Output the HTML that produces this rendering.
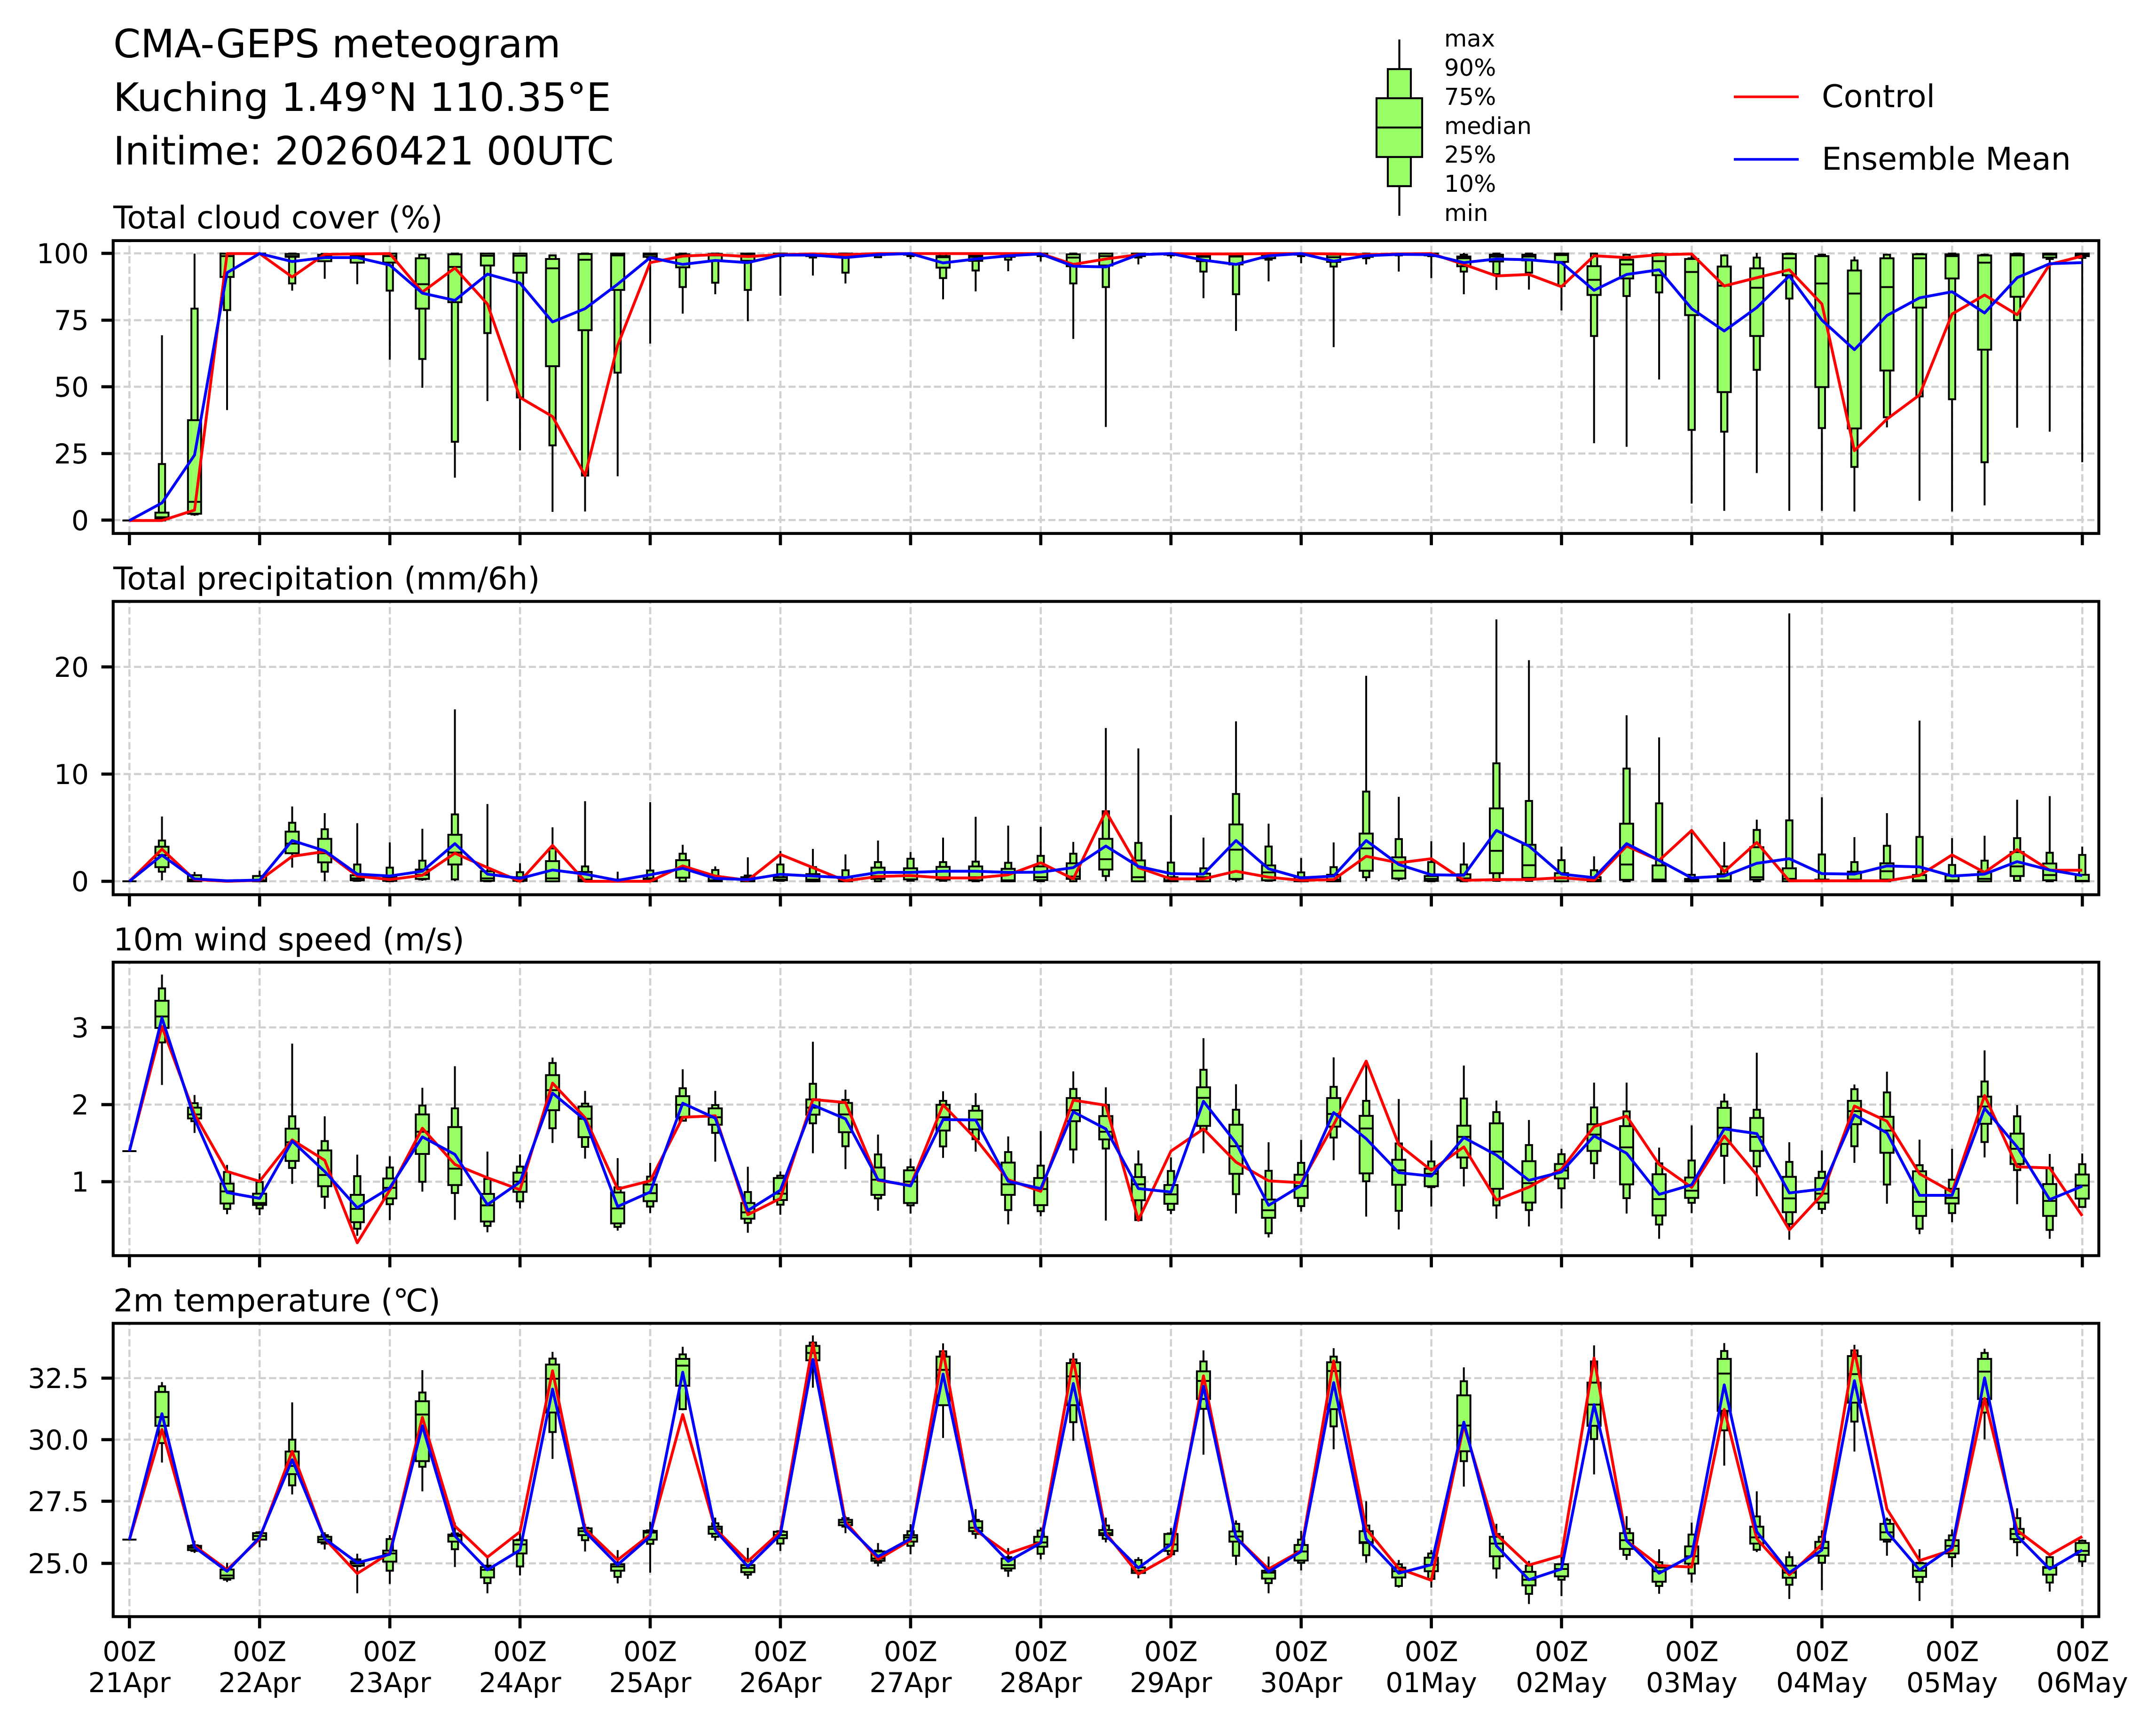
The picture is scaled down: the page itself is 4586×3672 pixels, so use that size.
<!DOCTYPE html>
<html><head><meta charset="utf-8"><title>CMA-GEPS meteogram</title>
<style>
html,body{margin:0;padding:0;background:#fff}
svg{display:block}
text{font-family:"DejaVu Sans","Liberation Sans",sans-serif;fill:#000;text-rendering:geometricPrecision}
.t{font-size:58.3px}.e{text-anchor:end}.m{text-anchor:middle}.h{font-size:83.3px}.s{font-size:66.7px}.l{font-size:49.6px}
</style></head><body>
<svg xmlns="http://www.w3.org/2000/svg" width="4586" height="3672" viewBox="0 0 4586 3672">
<rect width="4586" height="3672" fill="#fff"/>
<g id="plots"></g>
<text class="h" x="241" y="122">CMA-GEPS meteogram</text>
<text class="h" x="241" y="236">Kuching 1.49°N 110.35°E</text>
<text class="h" x="241" y="350">Initime: 20260421 00UTC</text>
<text class="s" x="241" y="486">Total cloud cover (%)</text>
<text class="s" x="241" y="1254">Total precipitation (mm/6h)</text>
<text class="s" x="241" y="2022">10m wind speed (m/s)</text>
<text class="s" x="241" y="2790">2m temperature (℃)</text>
<g class="t e">
<text x="189" y="560">100</text><text x="189" y="702">75</text><text x="189" y="844">50</text><text x="189" y="986">25</text><text x="189" y="1128">0</text>
<text x="189" y="1440">20</text><text x="189" y="1668">10</text><text x="189" y="1896">0</text>
<text x="189" y="2207">3</text><text x="189" y="2371">2</text><text x="189" y="2535">1</text>
<text x="189" y="2953">32.5</text><text x="189" y="3084">30.0</text><text x="189" y="3215">27.5</text><text x="189" y="3347">25.0</text>
</g>
<g class="t m">
<text x="275.3" y="3534">00Z</text><text x="552.2" y="3534">00Z</text><text x="829.2" y="3534">00Z</text><text x="1106.1" y="3534">00Z</text><text x="1383" y="3534">00Z</text><text x="1659.9" y="3534">00Z</text><text x="1936.9" y="3534">00Z</text><text x="2213.8" y="3534">00Z</text><text x="2490.7" y="3534">00Z</text><text x="2767.7" y="3534">00Z</text><text x="3044.6" y="3534">00Z</text><text x="3321.5" y="3534">00Z</text><text x="3598.5" y="3534">00Z</text><text x="3875.4" y="3534">00Z</text><text x="4152.3" y="3534">00Z</text><text x="4429.3" y="3534">00Z</text>
<text x="275.3" y="3600">21Apr</text><text x="552.2" y="3600">22Apr</text><text x="829.2" y="3600">23Apr</text><text x="1106.1" y="3600">24Apr</text><text x="1383" y="3600">25Apr</text><text x="1659.9" y="3600">26Apr</text><text x="1936.9" y="3600">27Apr</text><text x="2213.8" y="3600">28Apr</text><text x="2490.7" y="3600">29Apr</text><text x="2767.7" y="3600">30Apr</text><text x="3044.6" y="3600">01May</text><text x="3321.5" y="3600">02May</text><text x="3598.5" y="3600">03May</text><text x="3875.4" y="3600">04May</text><text x="4152.3" y="3600">05May</text><text x="4429.3" y="3600">06May</text>
</g>
<!-- box legend -->
<g stroke="#000" stroke-width="4.2" fill="#99ff66">
<path d="M2976.5 84V147M2976.5 396V459" fill="none"/>
<rect x="2952" y="147" width="49" height="249"/>
<rect x="2928" y="209" width="97" height="125"/>
<path d="M2928 271.3H3025" fill="none"/>
</g>
<g class="l">
<text x="3072" y="99">max</text><text x="3072" y="161">90%</text><text x="3072" y="223">75%</text><text x="3072" y="285">median</text><text x="3072" y="346">25%</text><text x="3072" y="408">10%</text><text x="3072" y="470">min</text>
</g>
<path d="M3688 206H3826" stroke="#f00" stroke-width="5.6"/>
<path d="M3688 339H3826" stroke="#00f" stroke-width="5.6"/>
<text class="s" x="3875" y="228">Control</text>
<text class="s" x="3875" y="361">Ensemble Mean</text>
</svg>
<script>
var P=[
{o:0,k:1200/1568,top:511.9,bot:1134.9,g:[539,681.2,822.8,964.9,1106.4],first:1447,
b:[[932,1290,1425,1438,1443,1447,1447],[705,858,1168,1395,1428,1430,1434],[705,705,705,712,770,862,1140],[705,705,705,705,705,705,705],[705,705,706,712,714,788,808],[705,706,708,713,726,726,775],[706,706,709,713,730,730,790],[705,705,705,712,730,808,1000],[705,708,718,790,858,998,1078],[705,705,707,742,840,1228,1328],[705,705,705,711,738,926,1115],[705,705,705,711,758,1105,1252],[708,710,720,746,1018,1238,1423],[705,705,706,722,918,1322,1422],[705,705,705,710,806,1036,1324],[705,705,705,708,714,716,955],[705,705,707,712,743,798,872],[705,705,706,710,725,786,818],[705,705,705,710,725,806,893],[705,705,705,707,709,712,822],[705,705,705,707,712,716,766],[705,705,705,709,715,758,788],[705,705,705,706,709,715,716],[705,705,705,706,708,712,720],[705,706,712,715,744,773,832],[705,706,710,714,725,752,810],[705,705,705,708,714,722,754],[705,705,705,705,708,712,727],[705,705,707,716,740,788,942],[705,705,705,712,738,798,1187],[705,705,705,707,712,716,735],[704,705,705,706,708,710,718],[705,705,710,714,726,755,829],[705,705,710,713,735,818,920],[705,705,705,708,718,722,782],[705,705,705,706,708,712,732],[705,705,708,715,728,741,965],[705,705,708,712,714,718,735],[705,705,705,706,708,710,755],[704,705,705,706,710,712,773],[703,708,713,718,740,755,818],[705,705,708,713,727,762,806],[705,705,708,713,724,758,805],[705,705,705,709,728,795,863],[703,705,740,778,820,934,1232],[708,708,722,735,774,823,1242],[705,705,706,726,765,813,1055],[705,718,720,756,876,1195,1400],[707,710,741,794,1090,1200,1420],[703,716,746,800,934,1028,1315],[705,705,706,718,765,830,1420],[705,708,712,788,1076,1190,1420],[713,724,752,816,1191,1298,1422],[705,708,718,798,1030,1160,1188],[705,706,707,718,855,1102,1392],[705,705,707,712,774,1110,1422],[705,708,710,730,972,1285,1405],[705,705,706,710,825,890,1189],[704,705,705,708,716,720,1200],[705,705,705,707,712,717,1285]],
r:[1447,1447,1418,705,705,770,707,706,705,812,745,845,1105,1158,1322,960,730,712,708,713,708,706,708,705,705,705,705,705,705,735,720,708,705,706,706,705,705,706,708,706,705,735,767,763,797,711,716,708,706,795,772,750,845,1253,1165,1098,873,820,875,735,712],
u:[1447,1398,1265,758,705,727,716,716,737,815,835,762,787,895,858,790,716,735,724,730,709,709,716,708,705,731,720,711,706,740,742,708,705,723,735,711,705,726,711,707,708,730,720,722,730,807,763,750,858,920,855,767,890,972,877,828,811,870,772,733,730]},
{o:1180,k:800/1568,top:1279.5,bot:1903.5,g:[1418.8,1646.8,1874.9],first:1362,
b:[[1092,1192,1218,1253,1303,1322,1358],[1323,1337,1337,1355,1362,1362,1362],[1358,1361,1361,1361,1362,1362,1362],[1318,1340,1340,1358,1362,1362,1362],[1050,1118,1155,1205,1245,1245,1305],[1078,1145,1185,1245,1283,1322,1362],[1120,1292,1337,1350,1358,1360,1362],[1200,1305,1345,1355,1360,1362,1362],[1143,1276,1313,1335,1352,1354,1360],[645,1083,1168,1242,1292,1354,1362],[1040,1320,1320,1350,1360,1362,1362],[1287,1324,1345,1355,1360,1362,1362],[1137,1225,1278,1350,1362,1362,1362],[1028,1300,1323,1355,1362,1362,1362],[1322,1355,1355,1360,1362,1362,1362],[1032,1317,1350,1358,1362,1362,1362],[1210,1247,1274,1310,1347,1362,1362],[1300,1315,1345,1358,1362,1362,1362],[1262,1338,1345,1358,1362,1362,1362],[1236,1292,1345,1355,1358,1360,1362],[1227,1303,1332,1355,1362,1362,1362],[1250,1316,1345,1358,1362,1362,1362],[1192,1282,1305,1340,1352,1362,1362],[1240,1268,1308,1340,1354,1360,1362],[1180,1282,1302,1345,1355,1360,1362],[1093,1280,1300,1345,1358,1362,1362],[1130,1285,1310,1358,1362,1362,1362],[1135,1256,1300,1345,1357,1362,1362],[1198,1247,1287,1342,1352,1362,1362],[723,1070,1185,1270,1313,1340,1362],[808,1202,1275,1345,1362,1362,1362],[1086,1284,1345,1358,1362,1362,1362],[1180,1308,1330,1345,1362,1362,1362],[695,998,1125,1230,1352,1355,1365],[1122,1217,1296,1325,1358,1360,1364],[1265,1325,1345,1358,1362,1362,1362],[1200,1303,1335,1355,1362,1362,1362],[505,988,1163,1225,1318,1345,1362],[1010,1186,1262,1318,1350,1352,1362],[1195,1282,1340,1352,1360,1362,1362],[1200,1292,1333,1350,1358,1362,1362],[270,870,1058,1235,1328,1360,1362],[440,1027,1210,1295,1348,1360,1362],[1218,1274,1328,1350,1362,1362,1362],[1258,1316,1345,1356,1362,1362,1362],[670,892,1122,1292,1356,1362,1364],[762,1037,1296,1355,1362,1362,1362],[1150,1335,1352,1358,1362,1362,1362],[1198,1300,1332,1358,1362,1362,1362],[1105,1148,1220,1345,1355,1362,1364],[245,1108,1308,1352,1362,1362,1362],[1012,1250,1355,1358,1362,1362,1362],[1178,1282,1322,1355,1358,1362,1362],[1078,1214,1287,1320,1355,1362,1362],[692,1177,1336,1358,1362,1362,1362],[1182,1294,1338,1358,1362,1362,1362],[1172,1276,1322,1352,1362,1362,1362],[1022,1182,1240,1300,1340,1360,1362],[1007,1243,1288,1336,1358,1362,1362],[1218,1252,1335,1360,1362,1362,1362]],
r:[1362,1228,1355,1362,1358,1258,1238,1340,1355,1337,1245,1305,1362,1212,1362,1362,1362,1298,1340,1358,1250,1305,1360,1342,1338,1348,1348,1335,1285,1352,1070,1305,1352,1352,1320,1345,1358,1355,1258,1285,1268,1358,1355,1355,1347,1358,1215,1275,1150,1322,1200,1360,1360,1360,1360,1338,1252,1325,1230,1316,1316],
u:[1362,1253,1352,1360,1357,1192,1235,1332,1340,1320,1205,1332,1350,1315,1332,1358,1335,1308,1350,1355,1333,1340,1347,1325,1325,1320,1320,1325,1324,1305,1215,1300,1330,1332,1192,1310,1348,1340,1192,1292,1335,1337,1150,1215,1332,1347,1205,1275,1348,1340,1287,1268,1330,1332,1298,1302,1340,1332,1280,1315,1338]},
{o:1960,k:780/1568,top:2047,bot:2671.3,g:[2185.8,2350,2514],first:983,
b:[[228,287,340,407,456,518,700],[743,778,797,826,843,855,905],[1042,1072,1122,1155,1207,1230,1253],[1078,1115,1165,1205,1213,1228,1257],[523,834,887,945,1025,1055,1123],[834,940,980,1085,1133,1178,1230],[998,1090,1170,1230,1287,1315,1345],[1005,1053,1100,1140,1185,1210,1278],[712,788,826,900,995,1114,1156],[620,800,880,1058,1128,1162,1277],[985,1102,1166,1215,1284,1303,1330],[997,1049,1075,1113,1157,1198,1228],[583,606,658,722,808,885,948],[725,780,792,845,923,965,1015],[1013,1138,1160,1228,1292,1307,1323],[1033,1092,1126,1163,1197,1220,1248],[633,714,748,785,837,853,855],[725,786,800,838,870,905,1028],[1050,1158,1205,1245,1272,1290,1332],[1070,1088,1098,1165,1192,1212,1255],[515,695,762,797,827,864,992],[720,764,777,826,902,962,1060],[912,997,1053,1105,1170,1185,1238],[1015,1052,1065,1113,1205,1215,1250],[727,768,785,838,895,963,1012],[735,790,810,848,890,932,985],[920,987,1032,1125,1170,1235,1296],[897,1045,1098,1145,1214,1240,1262],[642,717,756,808,855,976,1035],[710,785,833,900,933,972,1280],[980,1040,1094,1125,1193,1278,1284],[1010,1068,1128,1168,1208,1234,1253],[500,635,710,755,875,890,992],[697,806,870,962,1080,1167,1250],[945,1067,1190,1236,1268,1334,1352],[935,1033,1084,1132,1183,1218,1242],[582,708,756,824,878,925,1022],[600,768,832,886,1078,1112,1263],[760,950,1020,1065,1127,1238,1318],[937,1027,1058,1080,1133,1137,1220],[617,758,874,922,1010,1055,1134],[767,816,864,985,1144,1215,1272],[850,957,1026,1120,1203,1235,1305],[973,996,1038,1066,1100,1142,1228],[690,796,868,912,982,1035,1102],[690,813,876,967,1125,1184,1250],[968,1035,1082,1188,1258,1297,1358],[873,1023,1096,1152,1183,1204,1248],[737,771,798,883,952,1003,1123],[562,806,841,922,982,1048,1176],[945,1029,1093,1185,1244,1295,1362],[980,1071,1098,1165,1203,1230,1252],[698,718,768,812,868,962,1033],[643,732,836,895,990,1126,1208],[934,1043,1069,1200,1260,1315,1338],[973,1105,1144,1183,1207,1248,1287],[552,685,750,792,866,944,1010],[786,834,908,973,1038,1064,1210],[995,1054,1124,1196,1260,1320,1358],[993,1039,1083,1130,1186,1222,1222]],
r:[983,450,825,1070,1112,935,1022,1375,1150,885,1040,1097,1148,692,840,1145,1110,838,832,1255,1185,762,775,1108,1130,785,930,1105,1155,765,787,1278,983,888,1030,1110,1118,870,598,955,1065,965,1192,1137,1060,878,833,1040,1138,918,1085,1320,1170,790,855,1080,1158,745,1050,1055,1260],
u:[983,413,845,1160,1185,940,1070,1225,1140,922,997,1212,1115,735,850,1220,1158,778,842,1237,1150,786,845,1105,1132,848,850,1112,1143,815,888,1143,1158,770,948,1215,1130,818,930,1075,1090,925,1000,1108,1072,918,992,1168,1127,888,908,1162,1145,828,905,1172,1172,800,965,1190,1133]},
{o:2730,k:942/1568,top:2815.3,bot:3439.3,g:[2931.9,3062.8,3193.8,3326],first:908,
b:[[350,365,385,474,505,566,635],[912,928,930,937,945,948,955],[990,1012,1014,1035,1045,1050,1058],[878,882,885,895,908,908,935],[422,554,596,647,676,716,748],[882,892,898,908,917,922,943],[958,978,985,992,1000,1002,1098],[892,906,947,957,986,1018,1065],[308,387,418,465,630,650,737],[848,886,890,895,915,942,1005],[965,1000,1005,1015,1042,1062,1098],[868,908,910,925,957,1003,1035],[243,267,288,338,458,527,622],[853,866,868,878,892,910,950],[945,990,995,1003,1018,1040,1063],[845,875,877,883,908,923,1025],[225,252,268,292,363,446,450],[830,850,862,870,887,898,912],[937,980,998,1008,1023,1032,1047],[868,878,880,892,903,922,948],[185,210,222,247,273,273,370],[825,832,838,847,857,862,885],[920,947,950,975,983,990,1003],[853,878,892,900,915,930,960],[213,241,260,307,432,432,548],[800,838,843,866,878,888,905],[938,970,975,998,1010,1018,1040],[865,876,898,918,933,958,978],[247,270,283,330,432,492,558],[830,858,874,885,892,905,918],[970,980,1006,1018,1026,1026,1045],[867,886,888,925,948,960,962],[238,277,312,346,410,445,607],[840,852,879,897,915,965,998],[968,1010,1018,1025,1046,1062,1098],[877,908,927,950,982,990,1017],[230,260,280,311,446,507,588],[772,858,878,917,920,963,990],[980,995,1007,1020,1042,1072,1078],[945,957,972,997,1020,1047,1078],[298,347,397,504,595,630,720],[852,888,898,922,967,1010,1046],[983,1000,1022,1050,1070,1100,1136],[965,995,995,1012,1038,1050,1108],[220,277,352,430,505,552,677],[825,870,885,910,941,962,980],[942,988,1007,1020,1057,1072,1100],[848,890,932,967,993,1028,1060],[212,240,268,320,452,521,646],[737,826,862,900,922,944,952],[950,970,1000,1025,1043,1068,1118],[875,898,916,938,965,990,1087],[218,238,258,322,423,490,596],[830,838,852,882,908,915,965],[942,990,992,1018,1040,1058,1125],[872,893,910,930,957,970,1006],[232,247,268,313,410,458,553],[797,832,870,888,906,917,967],[970,970,1005,1008,1032,1060,1092],[908,912,920,948,962,985,1005]],
r:[908,518,930,1015,905,595,905,1028,955,475,860,970,880,310,870,980,890,465,870,985,880,212,845,978,910,240,875,957,918,270,885,1030,965,328,900,1012,947,275,870,1010,1052,502,890,998,965,265,912,1000,1005,447,905,1033,925,238,800,982,945,408,875,962,897],
u:[908,462,935,1020,900,625,905,990,960,505,895,1015,945,375,880,997,897,315,875,1003,890,270,855,968,905,322,865,985,920,355,893,1008,925,365,900,1022,950,352,905,1027,997,492,930,1050,1012,430,912,1027,965,360,880,1025,945,345,880,1015,935,335,895,1012,945]}
];
var L=240.7,R=4464.4,X0=275.3,DX=69.23,out='';
function f(v){return v.toFixed(1)}
P.forEach(function(p,n){
 var Y=function(v){return p.o+v*p.k},s='',i,k;
 var cid='c'+n;
 s+='<clipPath id="'+cid+'"><rect x="'+L+'" y="'+p.top+'" width="'+(R-L)+'" height="'+(p.bot-p.top)+'"/></clipPath>';
 /* grid */
 var g='';
 for(k=0;k<16;k++){var x=f(X0+276.93*k);g+='M'+x+' '+p.bot+'V'+p.top;}
 p.g.forEach(function(y){g+='M'+L+' '+y+'H'+R;});
 s+='<path d="'+g+'" stroke="#d0d0d0" stroke-width="4.5" stroke-dasharray="15.4 6.7" fill="none"/>';
 /* boxes */
 var W='',B='',M='';
 var fy=f(Y(p.first));
 M+='M'+f(X0-15)+' '+fy+'H'+f(X0+15);
 p.b.forEach(function(a,j){
  var x=X0+DX*(j+1),t=a.map(Y);
  W+='M'+f(x)+' '+f(t[0])+'V'+f(t[6]);
  B+='<rect x="'+f(x-6.7)+'" y="'+f(t[1])+'" width="13.4" height="'+f(t[5]-t[1])+'"/><rect x="'+f(x-14)+'" y="'+f(t[2])+'" width="28" height="'+f(t[4]-t[2])+'"/>';
  M+='M'+f(x-14)+' '+f(t[3])+'H'+f(x+14);
 });
 s+='<g clip-path="url(#'+cid+')">';
 s+='<path d="'+W+'" stroke="#000" stroke-width="4" fill="none"/>';
 s+='<g fill="#99ff66" stroke="#000" stroke-width="4">'+B+'</g>';
 s+='<path d="'+M+'" stroke="#000" stroke-width="4" fill="none"/>';
 var line=function(arr,c){
  return '<path d="M'+arr.map(function(v,j){return f(X0+DX*j)+' '+f(Y(v));}).join('L')+'" stroke="'+c+'" stroke-width="6" fill="none" stroke-linejoin="round"/>';
 };
 s+=line(p.r,'#f00')+line(p.u,'#00f')+'</g>';
 /* ticks */
 var T='';
 for(k=0;k<16;k++){var x2=f(X0+276.93*k);T+='M'+x2+' '+p.bot+'v25';}
 p.g.forEach(function(y){T+='M215.6 '+y+'H'+L;});
 s+='<path d="'+T+'" stroke="#000" stroke-width="6.67" fill="none"/>';
 s+='<rect x="'+L+'" y="'+p.top+'" width="'+(R-L)+'" height="'+(p.bot-p.top)+'" fill="none" stroke="#000" stroke-width="6.2"/>';
 out+=s;
});
document.getElementById('plots').innerHTML=out;
</script>
</body></html>
